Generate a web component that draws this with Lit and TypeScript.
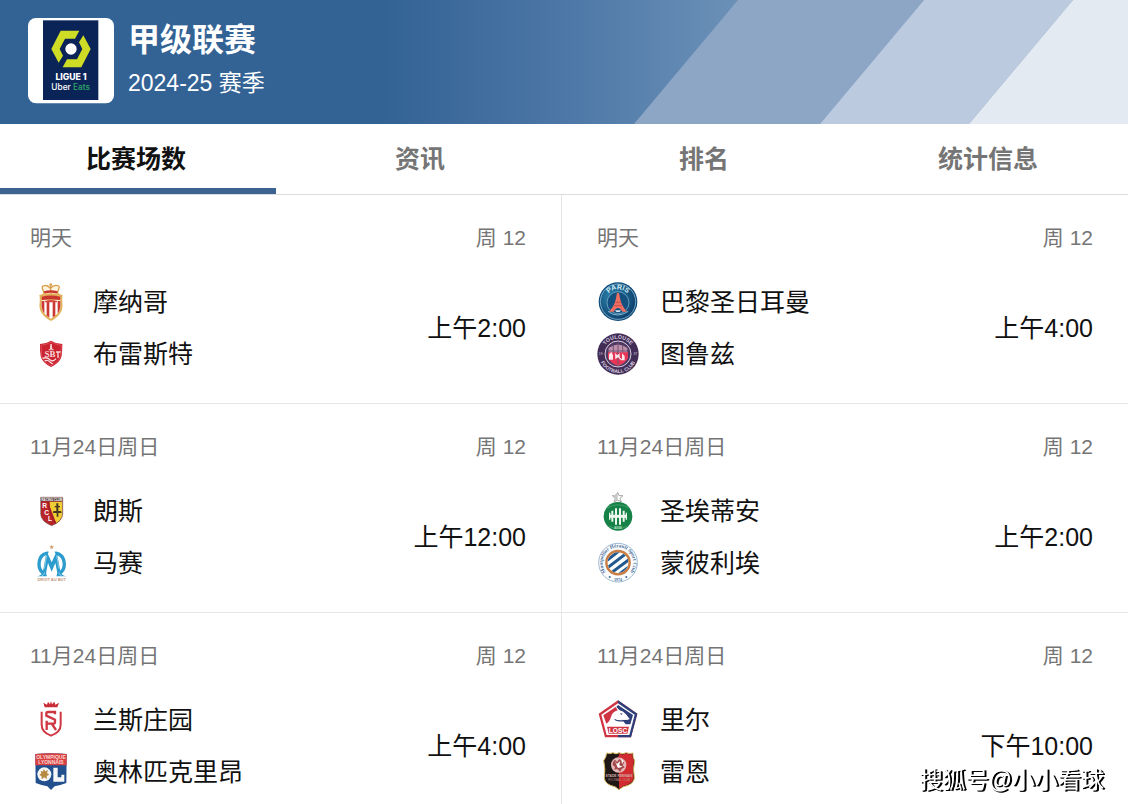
import { LitElement, html, css, svg, SVGTemplateResult } from "lit";
import { customElement, property, state } from "lit/decorators.js";

interface Team {
  name: string;
  crest: string;
}

interface Match {
  day: string;
  round: string;
  time: string;
  teams: [Team, Team];
}

const TABS = ["比赛场数", "资讯", "排名", "统计信息"];

const MATCHES: Match[] = [
  { day: "明天", round: "周 12", time: "上午2:00", teams: [{ name: "摩纳哥", crest: "monaco" }, { name: "布雷斯特", crest: "brest" }] },
  { day: "明天", round: "周 12", time: "上午4:00", teams: [{ name: "巴黎圣日耳曼", crest: "paris" }, { name: "图鲁兹", crest: "toulouse" }] },
  { day: "11月24日周日", round: "周 12", time: "上午12:00", teams: [{ name: "朗斯", crest: "lens" }, { name: "马赛", crest: "marseille" }] },
  { day: "11月24日周日", round: "周 12", time: "上午2:00", teams: [{ name: "圣埃蒂安", crest: "etienne" }, { name: "蒙彼利埃", crest: "montpellier" }] },
  { day: "11月24日周日", round: "周 12", time: "上午4:00", teams: [{ name: "兰斯庄园", crest: "reims" }, { name: "奥林匹克里昂", crest: "lyon" }] },
  { day: "11月24日周日", round: "周 12", time: "下午10:00", teams: [{ name: "里尔", crest: "lille" }, { name: "雷恩", crest: "rennes" }] },
];

/* Club crests, each drawn on a 126 x 126 grid. */
const CRESTS: Record<string, SVGTemplateResult> = {
  monaco: svg`
    <path d="M42 38 L36 22 Q34 14 42 13 Q52 10 62 14 Q74 10 84 13 Q91 14 89 22 L83 38 Z" fill="#fdf3df"/>
    <path d="M42 36 L37 22 Q35 15 43 14 Q53 11 61 22 Q72 11 82 14 Q90 15 87 22 L82 36 M62 12 V34" fill="none" stroke="#d9a04c" stroke-width="4"/>
    <circle cx="62" cy="11" r="4" fill="#d9a04c"/>
    <path d="M42 31 Q62 24 83 31 L82 38 Q62 33 43 38 Z" fill="#c9362f"/>
    <path d="M28 42 Q36 42 41 36 Q52 40 63 35 Q74 40 85 36 Q90 42 98 42 Q95 52 97 64 Q101 88 85 104 Q75 114 63 120 Q51 114 41 104 Q25 88 29 64 Q31 52 28 42 Z" fill="#e3b05c"/>
    <path d="M35 58 H91 Q95 84 81 99 Q73 107 63 113 Q53 107 45 99 Q31 84 35 58 Z" fill="#fff"/>
    <path d="M35 47 Q63 40 91 47 L90 57 Q63 52 36 57 Z" fill="#c9362f"/>
    <path d="M35 60 H43 V97 Q33 86 35 60 Z M50 60 H58 V109 L50 104 Z M68 60 H76 V104 L68 109 Z M83 60 H91 Q93 86 83 97 Z" fill="#cb3733"/>
    <path d="M45 60 Q63 54 81 60 V64 H45 Z" fill="#d6473d"/>`,
  brest: svg`
    <path d="M30 33 Q49 32 63 23 Q77 32 97 33 Q97 53 95 69 Q91 89 63 102 Q36 89 32 69 Q29 53 30 33 Z" fill="#cb2230"/>
    <path d="M33 37 Q50 35 63 27 Q77 35 94 37 L92 67 Q88 87 63 98 Q39 87 35 67 Z" fill="none" stroke="#e4606a" stroke-width="2"/>
    <path d="M61 33 L65 33 L67 48 H60 Z M56 49 H71 V52 H56 Z" fill="#f7d5d8"/>
    <text x="60" y="73" text-anchor="middle" font-size="27" font-weight="bold" class="serif" fill="#f8dadd">SB</text>
    <path d="M78 57 L92 57 M84 56 V75 M38 76 Q51 71 60 80 Q70 88 78 77 M44 84 Q53 79 60 87 L68 93" stroke="#f8dadd" stroke-width="4" fill="none"/>`,
  paris: svg`
    <defs>
      <radialGradient id="psg" cx="35%" cy="35%" r="75%">
        <stop offset="0" stop-color="#2a83ad"/><stop offset="1" stop-color="#0b3c67"/>
      </radialGradient>
      <path id="psgArc" d="M25 63 A38 38 0 0 1 101 63"/>
    </defs>
    <circle cx="63" cy="62" r="58" fill="#104d7c"/>
    <circle cx="63" cy="62" r="53" fill="url(#psg)" stroke="#a9d0e4" stroke-width="2"/>
    <circle cx="63" cy="65" r="33" fill="#14507f" stroke="#8fbfd8" stroke-width="2"/>
    <text font-size="21" font-weight="bold" class="sans" fill="#d9edf7"><textPath href="#psgArc" startOffset="50%" text-anchor="middle">PARIS</textPath></text>
    <path d="M60 36 H66 L70 56 Q75 76 90 92 H76 Q70 81 63 81 Q56 81 50 92 H36 Q51 76 56 56 Z" fill="#ee6f60"/>
    <path d="M55 64 H71 M51 74 H75" stroke="#c84e51" stroke-width="3"/>
    <path d="M54 88 H72 L68 93 H58 Z" fill="#d7e7ee"/>
    <path d="M33 91 Q60 113 94 91" stroke="#83b9d4" stroke-width="3" fill="none"/>`,
  toulouse: svg`
    <defs>
      <path id="tlTop" d="M17 63 A46 46 0 0 1 109 63"/>
      <path id="tlBottom" d="M6 63 A57 57 0 0 0 120 63"/>
    </defs>
    <circle cx="63" cy="63" r="62" fill="#412d55"/>
    <circle cx="63" cy="63" r="39" fill="#4e3963" stroke="#d9cfdf" stroke-width="3"/>
    <text font-size="16" font-weight="bold" class="sans" fill="#d8cee0"><textPath href="#tlTop" startOffset="50%" text-anchor="middle">TOULOUSE</textPath></text>
    <text font-size="15" font-weight="bold" class="sans" fill="#d8cee0"><textPath href="#tlBottom" startOffset="50%" text-anchor="middle">FOOTBALL CLUB</textPath></text>
    <path d="M35 45 Q63 24 91 45 V76 Q81 94 63 98 Q45 94 35 76 Z" fill="#bd91ab"/>
    <path d="M33 58 H93 V75 Q83 92 63 98 Q43 92 33 75 Z" fill="#e83556"/>
    <path d="M63 28 V95 M35 54 H91 M49 36 V58 M77 36 V58" stroke="#735274" stroke-width="3"/>
    <path d="M36 64 L43 57 L48 66 V80 H36 Z M54 60 L61 67 L68 60 V73 L75 79 V61 L83 69 V82 H72 L63 73 L55 79 Z" fill="#fbe6ec"/>
    <text x="11" y="67" text-anchor="middle" font-size="10" class="sans" fill="#d8cee0">19</text>
    <text x="115" y="67" text-anchor="middle" font-size="10" class="sans" fill="#d8cee0">37</text>`,
  lens: svg`
    <defs><clipPath id="lensShield"><path d="M32 24 H98 V72 Q97 94 65 107 Q33 94 32 72 Z"/></clipPath></defs>
    <g clip-path="url(#lensShield)">
      <path d="M32 20 H98 V108 H32 Z" fill="#b92529"/>
      <path d="M59 35 H98 V108 H82 L59 48 Z" fill="#f0cd34"/>
      <path d="M32 20 H98 V34 H32 Z" fill="#504140"/>
      <path d="M55 35 Q58 76 80 104" fill="none" stroke="#a41f25" stroke-width="5"/>
    </g>
    <text x="65" y="32" text-anchor="middle" font-size="9" font-weight="bold" class="sans" fill="#fff">RACING CLUB</text>
    <g font-size="20" font-weight="bold" class="sans" fill="#fff">
      <text x="37" y="55">R</text><text x="43" y="75">C</text><text x="54" y="94">L</text>
    </g>
    <path d="M79 40 H85 V48 H90 V52 H85 V65 H79 V52 H74 V48 H79 Z M70 63 H93 L95 69 H85 V80 H80 V69 H69 Z" fill="#443822"/>
    <path d="M32 22 H98 V72 Q97 94 65 107 Q33 94 32 72 Z" fill="none" stroke="#6c4038" stroke-width="2"/>`,
  marseille: svg`
    <path d="M65 8 L67 13 L72 13 L68 17 L70 22 L65 19 L60 22 L62 17 L58 13 L63 13 Z" fill="#d2a070"/>
    <path d="M43 96 Q27 86 27 67 Q27 45 43 36 M86 96 Q103 86 103 67 Q103 45 86 36" fill="none" stroke="#2b9ccd" stroke-width="10"/>
    <path d="M38 34 Q49 26 57 29 L48 42 Z M92 34 Q81 26 73 29 L82 42 Z" fill="#2b9ccd"/>
    <path d="M21 103 Q36 101 39 88 L50 28 L65 61 L80 28 L91 88 Q94 101 109 103 H79 Q83 98 81 88 L76 63 L65 89 L54 63 L49 88 Q47 98 51 103 Z" fill="#2b9ccd"/>
    <path d="M44 91 Q42 100 34 103 M86 91 Q89 100 96 103 M43 80 L50 40 M87 80 L80 40" fill="none" stroke="#b9e2f3" stroke-width="2"/>
    <text x="65" y="118" text-anchor="middle" font-size="12" font-weight="bold" class="sans" fill="#c4957d">DROIT AU BUT</text>`,
  etienne: svg`
    <circle cx="63" cy="79" r="43" fill="#168248"/>
    <path d="M62 7 L66 17 L78 17 L69 25 L73 36 L62 30 L51 36 L55 25 L46 17 L58 17 Z" fill="#fff" stroke="#a7a7a7" stroke-width="3"/>
    <path d="M62 9 V29 L53 35 L56 24 L47 18 Z" fill="#c6c8c8"/>
    <path d="M30 54 Q63 35 96 54 M35 108 Q63 123 91 108" fill="none" stroke="#55ac78" stroke-width="2"/>
    <path d="M46 62 V95 M57 55 V104 M69 55 V104 M80 62 V95" stroke="#edf7ef" stroke-width="6"/>
    <path d="M38 68 V89 M88 68 V89" stroke="#edf7ef" stroke-width="4"/>
    <path d="M36 79 H90" stroke="#edf7ef" stroke-width="9"/>
    <text x="63" y="117" text-anchor="middle" font-size="9" font-weight="bold" class="sans" fill="#b7dbc4">ASSE</text>`,
  montpellier: svg`
    <defs>
      <clipPath id="mhCore"><circle cx="63" cy="62" r="31"/></clipPath>
      <path id="mhArc" d="M29 93 A46 46 0 1 1 97 93"/>
    </defs>
    <circle cx="63" cy="62" r="58" fill="#fbfcfd" stroke="#9fb8d1" stroke-width="3"/>
    <circle cx="63" cy="62" r="35" fill="#fff" stroke="#c97d42" stroke-width="7"/>
    <g clip-path="url(#mhCore)">
      <path d="M16 66 L80 16 M20 86 L104 22 M30 102 L110 42 M46 112 L110 64" stroke="#23598f" stroke-width="9"/>
    </g>
    <text font-size="15" font-weight="bold" class="serif" fill="#3e6996"><textPath href="#mhArc" startOffset="50%" text-anchor="middle">Montpellier Hérault Sport Club</textPath></text>
    <text x="63" y="116" text-anchor="middle" font-size="12" font-weight="bold" class="serif" fill="#3e6996">1974</text>
    <circle cx="38" cy="105" r="3" fill="#3e6996"/><circle cx="88" cy="105" r="3" fill="#3e6996"/>`,
  reims: svg`
    <path d="M44 25 L40 11 L51 17 L54 8 L60 16 L63 6 L66 16 L73 8 L76 17 L87 11 L82 25 Z" fill="#c92d38"/>
    <path d="M35 38 V77 Q35 99 63 110 Q92 99 92 77 V38" fill="none" stroke="#cf3742" stroke-width="6"/>
    <path d="M75 46 V39 H54 Q49 39 49 45 V50 L75 62 V68 Q75 74 69 74 H50 V93 M50 65 V74 M65 74 L78 93" fill="none" stroke="#cf3742" stroke-width="7"/>`,
  lyon: svg`
    <path d="M16 9 Q63 5 110 9 L109 96 Q88 104 74 106 L63 117 L52 106 Q38 104 17 96 Z" fill="#22508f"/>
    <path d="M16 9 Q63 5 110 9 V43 H16 Z" fill="#db4040"/>
    <g font-size="15" font-weight="bold" class="sans" text-anchor="middle" fill="#f6d8d5">
      <text x="63" y="24">OLYMPIQUE</text><text x="63" y="39">LYONNAIS</text>
    </g>
    <circle cx="43" cy="70" r="21" fill="#f5f6f5"/>
    <path d="M41 54 L46 61 L54 57 L51 66 L58 71 L50 75 L51 84 L43 79 L35 85 L35 76 L28 72 L34 67 L32 59 L39 62 Z" fill="#b78a42"/>
    <path d="M70 50 H83 V79 H94 V71 H103 V92 H70 Z" fill="#f5f6f5"/>`,
  lille: svg`
    <path d="M63 4 L121 44 L102 115 H24 L5 44 Z" fill="#d03443"/>
    <path d="M63 4 L121 44 L102 115 H63 Z" fill="#2d3e78"/>
    <path d="M63 13 L113 47 L97 108 H29 L13 47 Z" fill="#fff"/>
    <path d="M63 18 L108 48 L100 76 H86 Q80 66 73 62 Q92 65 98 60 L87 46 Q78 35 68 34 L58 24 Z" fill="#2d3e78"/>
    <path d="M56 24 L62 34 Q47 38 42 53 Q38 68 28 74 L19 49 Z" fill="#d03443"/>
    <path d="M69 43 L77 44 L73 48 Z M52 59 Q65 67 85 62 L82 66 Q66 70 54 64 Z" fill="#2d3e78"/>
    <path d="M30 83 H96 L91 104 H35 Z" fill="#d03443"/>
    <text x="63" y="101" text-anchor="middle" font-size="20" font-weight="bold" class="sans" fill="#fff">LOSC</text>`,
  rennes: svg`
    <defs><clipPath id="rnHalf"><path d="M66 0 H126 V126 H66 Z"/></clipPath></defs>
    <path d="M29 6 Q38 10 48 5 Q57 12 66 5 Q76 12 87 5 Q98 10 108 6 Q106 18 113 29 Q107 53 112 79 Q112 95 93 103 Q76 106 66 116 Q56 106 40 103 Q22 95 22 79 Q26 53 20 29 Q28 18 29 6 Z" fill="#1e1716" stroke="#d8b85d" stroke-width="3"/>
    <path d="M29 8 Q38 12 48 7 Q57 14 66 7 Q76 14 87 7 Q98 12 106 8 Q105 18 111 29 Q105 53 110 79 Q110 93 92 101 Q76 104 66 113 Z" fill="#d12b2f" clip-path="url(#rnHalf)"/>
    <circle cx="65" cy="42" r="23" fill="#e5b9b9"/>
    <path d="M48 33 L54 26 L60 33 L67 24 L75 30 L82 33 L77 43 L83 49 L75 53 L69 62 L61 54 L52 56 L54 47 L47 43 Z" fill="#a3474b"/>
    <path d="M53 29 L60 39 L69 30 L67 43 L77 47 L63 51 Z M73 24 L80 31 L75 39 Z" fill="#fff"/>
    <path d="M63 17 Q78 17 84 27" fill="none" stroke="#ca3338" stroke-width="4"/>
    <text x="66" y="79" text-anchor="middle" font-size="10" font-weight="bold" class="sans" fill="#d7adab">STADE RENNAIS</text>
    <text x="66" y="90" text-anchor="middle" font-size="8" class="sans" fill="#c08b89">FOOTBALL CLUB</text>`,
};

@customElement("team-crest")
export class TeamCrest extends LitElement {
  @property() club = "";

  static styles = css`
    :host {
      display: block;
      width: 42px;
      height: 42px;
    }
    .crest {
      display: block;
      width: 100%;
      height: 100%;
    }
    .sans {
      font-family: "Liberation Sans", sans-serif;
    }
    .serif {
      font-family: "Liberation Serif", serif;
    }
  `;

  render() {
    return html`<svg class="crest" viewBox="0 0 126 126" aria-hidden="true">${CRESTS[this.club]}</svg>`;
  }
}

@customElement("match-card")
export class MatchCard extends LitElement {
  @property({ attribute: false }) match!: Match;

  static styles = css`
    :host {
      display: block;
    }
    .meta {
      display: flex;
      justify-content: space-between;
      margin-bottom: 22px;
      font-size: 21px;
      line-height: 32px;
      color: #757575;
    }
    .body {
      display: flex;
      align-items: center;
      justify-content: space-between;
      gap: 16px;
    }
    .teams {
      margin: 0;
      padding: 0;
      list-style: none;
    }
    .team {
      display: flex;
      align-items: center;
      gap: 21px;
      height: 52px;
    }
    .name,
    .time {
      font-size: 25px;
      line-height: 52px;
      color: #111;
      white-space: nowrap;
    }
  `;

  render() {
    const m = this.match;
    return html`
      <div class="meta"><span>${m.day}</span><span>${m.round}</span></div>
      <div class="body">
        <ul class="teams">
          ${m.teams.map(
            (t) => html`<li class="team">
              <team-crest .club=${t.crest}></team-crest>
              <span class="name">${t.name}</span>
            </li>`
          )}
        </ul>
        <time class="time">${m.time}</time>
      </div>
    `;
  }
}

@customElement("app-root")
export class AppRoot extends LitElement {
  @state() private active = 0;

  static styles = css`
    :host {
      display: block;
      height: 100vh;
      overflow-y: auto;
      scrollbar-width: none;
      background: #fff;
      font-family: "Liberation Sans", "Noto Sans CJK SC", sans-serif;
    }
    .banner {
      position: relative;
      display: flex;
      align-items: flex-start;
      gap: 14px;
      padding: 18px 28px 20px;
      background: linear-gradient(90deg, #336295 34%, #4c77a6 50%, #7195bb 68%);
      color: #fff;
    }
    .stripes {
      position: absolute;
      inset: 0;
      width: 100%;
      height: 100%;
    }
    .logo {
      position: relative;
      flex: none;
      width: 86px;
      height: 86px;
    }
    .league {
      font-family: Inter, sans-serif;
    }
    .heading {
      position: relative;
    }
    .title {
      margin: 0;
      font-size: 32px;
      line-height: 44px;
      font-weight: 700;
    }
    .season {
      margin: 0;
      font-size: 23px;
      line-height: 42px;
    }
    .tabs {
      display: flex;
      gap: 8px;
      border-bottom: 1px solid #dadce0;
    }
    .tab {
      flex: 1;
      height: 70px;
      padding: 5px 4px 0 0;
      border: 0;
      border-bottom: 6px solid transparent;
      background: none;
      color: #757575;
      font-family: inherit;
      font-size: 25px;
      font-weight: 700;
      line-height: 36px;
      cursor: pointer;
    }
    .tab.active {
      border-bottom-color: #3c6390;
      color: #111;
    }
    .row {
      display: flex;
      border-bottom: 1px solid #e4e6e8;
    }
    .match {
      flex: 1 1 0;
      padding: 27px 35px 23px 30px;
    }
    .match + .match {
      padding-left: 35px;
      border-left: 1px solid #e4e6e8;
    }
    .watermark {
      position: fixed;
      right: 24px;
      bottom: 8px;
      color: #fff;
      font-size: 23px;
      line-height: 32px;
      text-shadow: 1px 1px 0 #000, 2px 1px 0 #000;
    }
  `;

  private renderLogo() {
    return html`<svg class="logo" viewBox="0 0 258 258" role="img" aria-label="Ligue 1 Uber Eats">
      <rect width="258" height="256" rx="24" fill="#fff" />
      <rect x="45" y="7" width="166" height="239" fill="#0b2458" />
      <path d="M154 38 H98 L70 93 L92 134 L105 113 L95 93 L111 62 H141 Z" fill="#cfdc25" />
      <path d="M104 148 H160 L188 93 L166 52 L153 73 L163 93 L147 124 H117 Z" fill="#cfdc25" />
      <circle cx="129" cy="93" r="17" fill="#fff" />
      <g class="league" text-anchor="middle">
        <text x="129" y="185" font-size="26" font-weight="800" fill="#fff">LIGUE 1</text>
        <text x="128" y="217" font-size="25" font-weight="500" fill="#fff">Uber <tspan fill="#2fa866">Eats</tspan></text>
      </g>
    </svg>`;
  }

  render() {
    const rows = [0, 2, 4].map((i) => MATCHES.slice(i, i + 2));
    return html`
      <header class="banner">
        <svg class="stripes" viewBox="0 0 1128 124" preserveAspectRatio="none" aria-hidden="true">
          <path d="M738 0 H924 L820 124 H634 Z" fill="#8da6c5" />
          <path d="M924 0 H1073 L969 124 H820 Z" fill="#bbcadf" />
          <path d="M1073 0 H1128 V124 H969 Z" fill="#e4eaf1" />
        </svg>
        ${this.renderLogo()}
        <div class="heading">
          <h1 class="title">甲级联赛</h1>
          <p class="season">2024-25 赛季</p>
        </div>
      </header>
      <nav class="tabs" role="tablist">
        ${TABS.map(
          (label, i) => html`<button
            class="tab ${i === this.active ? "active" : ""}"
            role="tab"
            aria-selected=${i === this.active ? "true" : "false"}
            @click=${() => (this.active = i)}
          >${label}</button>`
        )}
      </nav>
      <main>
        ${rows.map(
          (row) => html`<div class="row">
            ${row.map((m) => html`<match-card class="match" .match=${m}></match-card>`)}
          </div>`
        )}
      </main>
      <div class="watermark">搜狐号@小小看球</div>
    `;
  }
}
